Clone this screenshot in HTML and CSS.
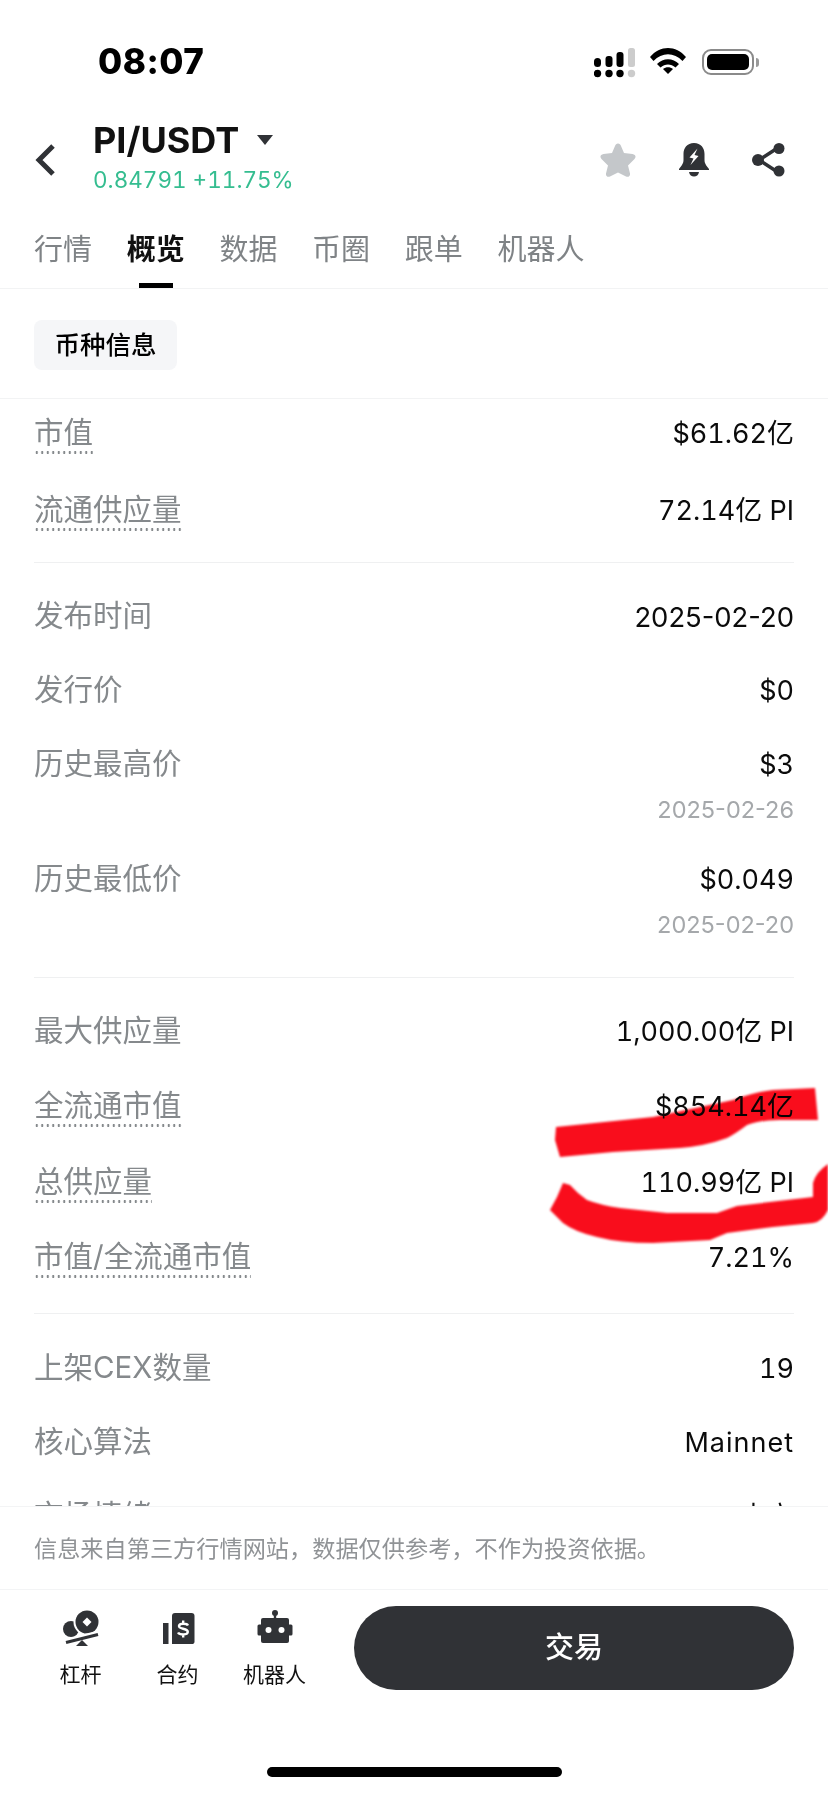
FILE: index.html
```html
<!DOCTYPE html>
<html>
  <head>
    <meta http-equiv="content-type" content="text/html; charset=UTF-8" />
    <title>PI/USDT</title>
    <link rel="stylesheet" href="styles.css">
  </head>

  <body>
    <div class="page">
      <div class="statusbar">
        <span class="time">08:07</span>
        <div class="status-icons">
          <svg class="ic-signal" width="42" height="30" viewBox="0 0 42 30">
            <rect x="0" y="10" width="7" height="9" rx="3.5" fill="#000"/>
            <rect x="11.500" y="8" width="7" height="11" rx="3" fill="#000"/>
            <rect x="22.500" y="4" width="7" height="15" rx="3" fill="#000"/>
            <rect x="34" y="0" width="7" height="19" rx="2.500" fill="#ccc"/>
            <circle cx="3.500" cy="25.500" r="3.700" fill="#000"/>
            <circle cx="15" cy="25.500" r="3.700" fill="#000"/>
            <circle cx="26" cy="25.500" r="3.700" fill="#000"/>
            <circle cx="37.500" cy="25.500" r="3.700" fill="#ccc"/>
          </svg>
          <svg class="ic-wifi" width="36" height="26" viewBox="0 0 36 26">
            <path d="M0 9 C10 -3 26 -3 36 9 L32.500 13 C24 4 12 4 3.500 13 Z" fill="#000"/>
            <path d="M7 16 C13 9.500 23 9.500 29 16 L25.500 19.500 C21 15.500 15 15.500 10.500 19.500 Z" fill="#000"/>
            <path d="M13 21 C16 18.500 20 18.500 23 21 L18 26 Z" fill="#000"/>
          </svg>
          <div class="battery"><div class="battery-fill"></div></div>
          <div class="battery-cap"></div>
        </div>
      </div>

      <div class="header">
        <svg class="ic-back" width="22" height="34" viewBox="0 0 22 34">
          <path d="M19 3 L5 17 L19 31" fill="none" stroke="#303236" stroke-width="5"/>
        </svg>
        <div class="pair">
          <div class="pair-name">PI/USDT <span class="caret"></span></div>
          <div class="pair-price">0.84791 +11.75%</div>
        </div>
        <div class="header-icons">
          <svg width="36" height="34" viewBox="0 0 36 34">
            <path d="M18 0.500 C19.500 0.500 20.500 1.500 21 3 L24 10 L32.500 11 C35.500 11.500 36.500 14 34.500 16 L28 22.500 L30 30.500 C30.500 33 28.500 34.500 26 33.500 L18 29.500 L10 33.500 C7.500 34.500 5.500 33 6 30.500 L8 22.500 L1.500 16 C-0.500 14 0.500 11.500 3.500 11 L12 10 L15 3 C15.500 1.500 16.500 0.500 18 0.500 Z" fill="#c4c7ca"/>
          </svg>
          <svg width="30" height="34" viewBox="0 0 30 34">
            <path d="M15 0 C22 0 25.500 5 25.500 11 L25.500 17 C25.500 21 28 23 30 26 L30 27 L0 27 L0 26 C2 23 4.500 21 4.500 17 L4.500 11 C4.500 5 8 0 15 0 Z" fill="#303236"/>
            <path d="M10 29 L20 29 C19.500 32 17.500 33.500 15 33.500 C12.500 33.500 10.500 32 10 29 Z" fill="#303236"/>
            <path d="M18.500 5.500 L10.500 14.500 L14.500 15.500 L11.500 22 L19.500 13 L15.500 12 Z" fill="#fff"/>
          </svg>
          <svg width="33" height="34" viewBox="0 0 33 34">
            <path d="M24 6 L7 17 L24 28" fill="none" stroke="#303236" stroke-width="3.500"/>
            <circle cx="27" cy="5.500" r="5.500" fill="#303236"/>
            <circle cx="6" cy="17" r="6" fill="#303236"/>
            <circle cx="27" cy="28" r="5.500" fill="#303236"/>
          </svg>
        </div>
      </div>

      <div class="tabs">
        <span class="tab">行情</span>
        <span class="tab tab-active">概览</span>
        <span class="tab">数据</span>
        <span class="tab">币圈</span>
        <span class="tab">跟单</span>
        <span class="tab">机器人</span>
      </div>

      <div class="chipbar">
        <span class="chip">币种信息</span>
      </div>

      <div class="content">
        <div class="group group-first">
          <div class="row row-first"><span class="label dotted">市值</span><span class="value">$61.62亿</span></div>
          <div class="row"><span class="label dotted">流通供应量</span><span class="value">72.14亿 PI</span></div>
        </div>

        <div class="group group-second">
          <div class="row"><span class="label">发布时间</span><span class="value value-date">2025-02-20</span></div>
          <div class="row"><span class="label">发行价</span><span class="value">$0</span></div>
          <div class="row row-tall">
            <span class="label">历史最高价</span>
            <div class="value-stack"><span class="value">$3</span><span class="date">2025-02-26</span></div>
          </div>
          <div class="row row-tall">
            <span class="label">历史最低价</span>
            <div class="value-stack"><span class="value">$0.049</span><span class="date">2025-02-20</span></div>
          </div>
        </div>

        <div class="group group-wide">
          <div class="row"><span class="label">最大供应量</span><span class="value">1,000.00亿 PI</span></div>
          <div class="row"><span class="label dotted">全流通市值</span><span class="value">$854.14亿</span></div>
          <div class="row"><span class="label dotted">总供应量</span><span class="value">110.99亿 PI</span></div>
          <div class="row"><span class="label dotted">市值/全流通市值</span><span class="value">7.21%</span></div>
        </div>

        <div class="group group-last">
          <div class="row"><span class="label">上架CEX数量</span><span class="value">19</span></div>
          <div class="row"><span class="label">核心算法</span><span class="value value-word">Mainnet</span></div>
          <div class="row"><span class="label">市场情绪</span><span class="value">中立</span></div>
        </div>
      </div>

      <div class="notice">信息来自第三方行情网站，数据仅供参考，不作为投资依据。</div>

      <div class="actions">
        <div class="action">
          <svg width="36" height="38" viewBox="0 0 36 38">
            <circle cx="8" cy="21" r="8" fill="#303236"/>
            <circle cx="24" cy="14" r="13.500" fill="#fff"/>
            <circle cx="24" cy="14" r="11.500" fill="#303236"/>
            <path d="M24 9.500 L28.500 14 L24 18.500 L19.500 14 Z" fill="#fff"/>
            <path d="M1 35 L36 26" fill="none" stroke="#fff" stroke-width="7"/>
            <path d="M3 34.500 L35 26.500" fill="none" stroke="#303236" stroke-width="3"/>
            <path d="M19 32 L25 38 L13 38 Z" fill="#303236"/>
          </svg>
          <span class="action-label">杠杆</span>
        </div>
        <div class="action">
          <svg width="36" height="38" viewBox="0 0 36 38">
            <rect x="3" y="15" width="5.500" height="21" fill="#303236"/>
            <path d="M12 8 C12 6 13 5 15 5 L31.500 5 C33.500 5 34.500 6 34.500 8 L34.500 33.500 C34.500 35.500 33.500 36 31.500 36 L12 36 Z" fill="#303236"/>
            <path d="M28 17.500 C27 15.500 19.500 14.800 19 18 C18.500 21.500 28 20 27.800 24 C27.500 27.500 19.500 27 18 24.500 M23.200 12.500 L23.200 15.500 M23.200 26.500 L23.200 29.500" fill="none" stroke="#fff" stroke-width="2.400"/>
          </svg>
          <span class="action-label">合约</span>
        </div>
        <div class="action">
          <svg width="36" height="38" viewBox="0 0 36 38">
            <circle cx="18" cy="5" r="3" fill="#303236"/>
            <rect x="16.800" y="6.500" width="2.400" height="6" fill="#303236"/>
            <rect x="4" y="10" width="28" height="25" rx="2" fill="#303236"/>
            <rect x="0.500" y="16.500" width="5" height="11" rx="1.500" fill="#303236"/>
            <rect x="30.500" y="16.500" width="5" height="11" rx="1.500" fill="#303236"/>
            <circle cx="11.500" cy="22" r="3" fill="#fff"/>
            <circle cx="24.500" cy="22" r="3" fill="#fff"/>
          </svg>
          <span class="action-label">机器人</span>
        </div>
        <div class="trade">交易</div>
      </div>

      <div class="homebar"><div class="home-indicator"></div></div>

      <!-- marker strokes drawn over the screenshot -->
      <svg class="marker" width="828" height="1796" viewBox="0 0 828 1796">
        <path d="M556 1127 L653 1117 L733 1100 Q755 1092 773 1090 L815 1088 L818 1120 L780 1120 Q760 1120 747 1125 Q735 1134 727 1138 Q705 1146 680 1148 L613 1152 L560 1157 L555 1140 Z" fill="#f90d1c"/>
        <path d="M563 1183 L570 1185 Q578 1194 587 1200 Q600 1205 620 1208 L667 1213 L717 1213 L737 1206 L787 1200 L813 1197 L813 1183 Q816 1172 828 1164 L828 1210 Q822 1222 813 1223 L773 1227 L727 1233 L710 1240 L653 1243 Q620 1243 597 1237 Q575 1232 563 1223 L550 1210 L557 1197 Z" fill="#f90d1c"/>
      </svg>
    </div>
  </body>
</html>
```

FILE: styles.css
```css
* {
  box-sizing: border-box;
}

html,
body {
  margin: 0;
  padding: 0;
  background: #fff;
}

.page {
  position: relative;
  width: 828px;
  height: 1796px;
  overflow: hidden;
  display: flex;
  flex-direction: column;
  font-family: Inter, "Noto Sans CJK SC", sans-serif;
  color: #000;
}

.statusbar {
  height: 114px;
  padding: 41px 0 0 98px;
  display: flex;
  justify-content: space-between;
  align-items: flex-start;
}

.time {
  font-size: 35px;
  line-height: 40px;
  font-weight: 800;
  letter-spacing: 0.5px;
}

.status-icons {
  display: flex;
  align-items: flex-start;
  padding-right: 69px;
  margin-top: 6px;
}

.ic-signal {
  margin: 1px 14px 0 0;
}

.ic-wifi {
  margin: 1px 16px 0 0;
}

.battery {
  width: 52px;
  height: 26px;
  margin-top: 2px;
  padding: 3px;
  border: 2px solid #8a8a8a;
  border-radius: 9px;
}

.battery-fill {
  height: 100%;
  background: #000;
  border-radius: 5px;
}

.battery-cap {
  width: 3px;
  height: 9px;
  margin: 11px 0 0 2px;
  background: #999;
  border-radius: 0 3px 3px 0;
}

.header {
  height: 86px;
  padding: 0 43px 0 34px;
  display: flex;
  align-items: center;
}

.ic-back {
  margin-top: 6px;
  margin-right: 37px;
}

.pair {
  flex: 1;
  margin-bottom: 4px;
}

.pair-name {
  font-size: 36px;
  line-height: 50px;
  font-weight: 700;
  color: #111;
}

.caret {
  display: inline-block;
  width: 0;
  height: 0;
  margin: 0 0 6px 9px;
  vertical-align: middle;
  border-left: 8px solid transparent;
  border-right: 8px solid transparent;
  border-top: 10px solid #303236;
}

.pair-price {
  font-size: 22.500px;
  line-height: 30px;
  color: #35bd90;
  font-variant-numeric: tabular-nums;
}

.header-icons {
  display: flex;
  gap: 43px;
  align-items: center;
  margin-top: 6px;
}

.tabs {
  height: 89px;
  padding: 22px 0 0 34px;
  display: flex;
  gap: 34.700px;
  border-bottom: 1px solid #f2f3f4;
}

.tab {
  font-size: 29px;
  line-height: 56px;
  color: #7f8386;
}

.tab-active {
  position: relative;
  color: #111;
  font-weight: 700;
}

.tab-active::after {
  content: "";
  position: absolute;
  left: 12px;
  bottom: 0;
  width: 34px;
  height: 5px;
  background: #000;
}

.chipbar {
  height: 110px;
  padding: 31px 0 0 34px;
  border-bottom: 1px solid #f2f3f4;
}

.chip {
  display: inline-block;
  width: 143px;
  height: 50px;
  line-height: 50px;
  text-align: center;
  font-size: 25.500px;
  font-weight: 500;
  background: #f5f6f8;
  border-radius: 8px;
}

.content {
  flex: 1;
  min-height: 0;
  overflow: hidden;
  padding: 0 34px;
}

.group {
  padding: 18px 0 7px;
  border-bottom: 1px solid #eff0f1;
}

.group-first {
  padding: 0 0 13px;
}

.group-second {
  padding-bottom: 18px;
}

.group-wide {
  padding-bottom: 15px;
}

.group-wide .row {
  min-height: 75.500px;
}

.group-last {
  padding-top: 19px;
  border-bottom: 0;
}

.row {
  min-height: 74px;
  padding-top: 17px;
  display: flex;
  justify-content: space-between;
  align-items: flex-start;
}

.row-first {
  min-height: 75.500px;
  padding-top: 16px;
}

.row-tall {
  min-height: 115px;
}

.label {
  font-size: 29.500px;
  line-height: 35px;
  height: 39px;
  color: #85898c;
}

.dotted {
  background: radial-gradient(circle, #85898c 1.2px, transparent 1.4px) left bottom / 5.500px 3px repeat-x;
}

.value {
  font-size: 27px;
  line-height: 38px;
  color: #0b0b0b;
  font-variant-numeric: tabular-nums;
}

.value-date {
  font-size: 27.400px;
  font-variant-numeric: normal;
}

.value-word {
  letter-spacing: 1px;
}

.value-stack {
  display: flex;
  flex-direction: column;
  align-items: flex-end;
}

.date {
  margin-top: 11px;
  font-size: 23.500px;
  line-height: 30px;
  color: #a5a8ab;
}

.notice {
  height: 84px;
  padding: 0 0 0 34px;
  line-height: 84px;
  font-size: 23.200px;
  color: #909396;
  background: #fff;
  border-top: 1px solid #f3f4f5;
  border-bottom: 1px solid #f3f4f5;
}

.actions {
  height: 139px;
  padding: 16px 34px 0 32px;
  display: flex;
  align-items: flex-start;
}

.action {
  width: 97px;
  display: flex;
  flex-direction: column;
  align-items: center;
  margin-top: 2px;
}

.action-label {
  margin-top: 15px;
  font-size: 21px;
  line-height: 28px;
  color: #111;
  white-space: nowrap;
}

.trade {
  margin-left: 31px;
  width: 440px;
  height: 84px;
  line-height: 84px;
  text-align: center;
  font-size: 29px;
  font-weight: 500;
  color: #fff;
  background: #303236;
  border-radius: 42px;
}

.homebar {
  height: 67px;
  padding-top: 38px;
  display: flex;
  justify-content: center;
}

.home-indicator {
  width: 295px;
  height: 10px;
  background: #000;
  border-radius: 5px;
}

.marker {
  position: absolute;
  left: 0;
  top: 0;
  mix-blend-mode: multiply;
  pointer-events: none;
  filter: blur(0.8px);
}
```
